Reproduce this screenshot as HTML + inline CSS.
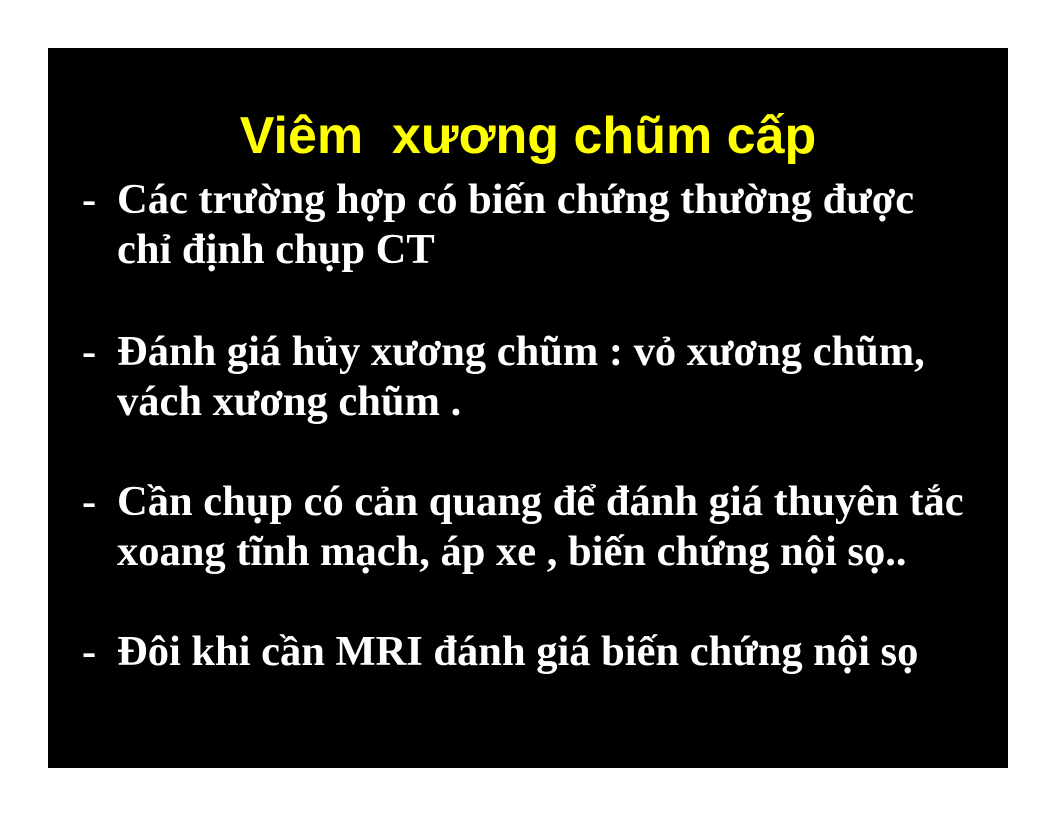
<!DOCTYPE html>
<html><head><meta charset="utf-8"><style>
body{margin:0;width:1056px;height:816px;background:#fff;position:relative;overflow:hidden}
.s{position:absolute;left:48px;top:48px;width:960px;height:720px;background:#000}
.t{position:absolute;left:0;width:1056px;text-align:center;top:106px;font:bold 52px/60px "Liberation Sans",sans-serif;color:#ffff00;white-space:pre}
.l{position:absolute;font:bold 42.5px/50px "Liberation Serif",serif;color:#fff;white-space:nowrap}
.d{left:82px}.x{left:117px}
</style></head><body>
<div class="s"></div>
<div class="t">Viêm  xương chũm cấp</div>
<div class="l d" style="top:175px">-</div>
<div class="l x" style="top:175px">Các trường hợp có biến chứng thường được</div>
<div class="l x" style="top:225px">chỉ định chụp CT</div>
<div class="l d" style="top:327px">-</div>
<div class="l x" style="top:327px">Đánh giá hủy xương chũm : vỏ xương chũm,</div>
<div class="l x" style="top:377px">vách xương chũm .</div>
<div class="l d" style="top:477px">-</div>
<div class="l x" style="top:477px">Cần chụp có cản quang để đánh giá thuyên tắc</div>
<div class="l x" style="top:527px">xoang tĩnh mạch, áp xe , biến chứng nội sọ..</div>
<div class="l d" style="top:627px">-</div>
<div class="l x" style="top:627px">Đôi khi cần MRI đánh giá biến chứng nội sọ</div>
</body></html>
